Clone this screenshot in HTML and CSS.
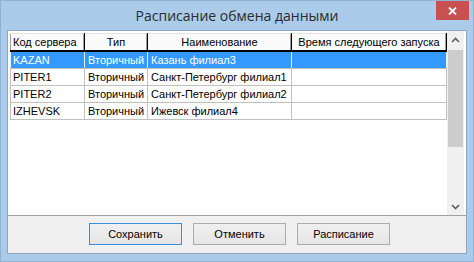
FILE: index.html
```html
<!DOCTYPE html>
<html lang="ru">
<head>
    <meta charset="UTF-8">
    <title>Расписание обмена данными</title>
    <link rel="stylesheet" href="styles.css">
</head>
<body>

    <div class="window">
        <div class="titlebar">
            <span></span>
            <span class="title">Расписание обмена данными</span>
            <span class="close">
                <svg width="9" height="8" viewBox="0 0 9 8"><path d="M1 0.5 L8 7.5 M8 0.5 L1 7.5" stroke="white" stroke-width="1.8"/></svg>
            </span>
        </div>

        <div class="client">
            <div class="list">
                <div class="table-wrap">
                    <table id="scheduleTable">
                        <colgroup>
                            <col style="width: 74px">
                            <col style="width: 63px">
                            <col style="width: 144px">
                            <col style="width: 155px">
                        </colgroup>
                        <thead>
                            <tr>
                                <th class="left">Код сервера</th>
                                <th>Тип</th>
                                <th>Наименование</th>
                                <th>Время следующего запуска</th>
                            </tr>
                        </thead>
                        <tbody>
                            <tr class="selected">
                                <td>KAZAN</td>
                                <td>Вторичный</td>
                                <td>Казань филиал3</td>
                                <td></td>
                            </tr>
                            <tr>
                                <td>PITER1</td>
                                <td>Вторичный</td>
                                <td>Санкт-Петербург филиал1</td>
                                <td></td>
                            </tr>
                            <tr>
                                <td>PITER2</td>
                                <td>Вторичный</td>
                                <td>Санкт-Петербург филиал2</td>
                                <td></td>
                            </tr>
                            <tr>
                                <td>IZHEVSK</td>
                                <td>Вторичный</td>
                                <td>Ижевск филиал4</td>
                                <td></td>
                            </tr>
                        </tbody>
                    </table>
                </div>
                <div class="scrollbar">
                    <div class="arrow">
                        <svg width="9" height="6" viewBox="0 0 9 6"><path d="M1 5 L4.5 1.5 L8 5" fill="none" stroke="#606060" stroke-width="1.6"/></svg>
                    </div>
                    <div class="track">
                        <div class="thumb"></div>
                    </div>
                    <div class="arrow">
                        <svg width="9" height="6" viewBox="0 0 9 6"><path d="M1 1 L4.5 4.5 L8 1" fill="none" stroke="#606060" stroke-width="1.6"/></svg>
                    </div>
                </div>
            </div>

            <div class="buttons">
                <button type="button" class="focused">Сохранить</button>
                <button type="button">Отменить</button>
                <button type="button">Расписание</button>
            </div>
        </div>
    </div>

</body>
</html>
```

FILE: styles.css
```css
body { margin: 0; font-family: "Liberation Sans", Arial, sans-serif; font-size: 11px; }
.window { width: 474px; height: 262px; box-sizing: border-box; background: #aacbea; border: 1px solid #8fb2d5; padding: 0 6px 7px 6px; display: flex; flex-direction: column; }
.titlebar { height: 29px; display: grid; grid-template-columns: 1fr auto 1fr; align-items: start; }
.title { font-family: "Open Sans", "Noto Sans", sans-serif; font-size: 14px; color: #2b2b2b; padding-top: 5px; }
.close { justify-self: end; width: 33px; height: 19px; margin-right: -2px; background: #c75050; display: flex; align-items: center; justify-content: center; }
.client { flex: 1; background: #f0f0f0; border: 1px solid #8ea6be; display: flex; flex-direction: column; }
.list { height: 184px; background: white; border-bottom: 1px solid #a0a0a0; display: flex; padding-right: 2px; }
.table-wrap { width: 439px; box-sizing: border-box; padding: 2px 1px 0 2px; }
#scheduleTable { width: 436px; border-collapse: collapse; table-layout: fixed; }
#scheduleTable th { height: 16px; padding: 0 2px; font-weight: normal; text-align: center; background: #fafafa; border-top: 1px solid #e3e3e3; border-left: 1px solid #e3e3e3; border-right: 1px solid #000; border-bottom: 2px solid #000; box-shadow: inset -1px 0 0 #a0a0a0; white-space: nowrap; overflow: hidden; }
#scheduleTable th.left { text-align: left; border-left: 1px solid #a0a0a0; }
#scheduleTable td { height: 16px; padding: 0 2px 0 3px; border: 1px solid #c0c0c0; white-space: nowrap; overflow: hidden; }
#scheduleTable td:first-child { padding-left: 2px; }
#scheduleTable tr.selected td { background: #3399ff; color: white; border-left-color: #e8f2ff; border-right-color: #e8f2ff; }
.scrollbar { width: 17px; background: #f0f0f0; display: flex; flex-direction: column; }
.arrow { height: 17px; display: flex; align-items: center; justify-content: center; }
.track { flex: 1; padding-top: 2px; }
.thumb { height: 97px; margin: 0 1px; background: #cdcdcd; }
.buttons { flex: 1; display: flex; justify-content: center; align-items: flex-start; gap: 11px; padding: 7px 0 0 5px; }
button { width: 93px; height: 22px; font-family: "Liberation Sans", Arial, sans-serif; font-size: 11px; color: black; background: linear-gradient(#f0f0f0, #e5e5e5); border: 1px solid #acacac; padding: 0; }
button.focused { border-color: #3c8fdd; }
```
